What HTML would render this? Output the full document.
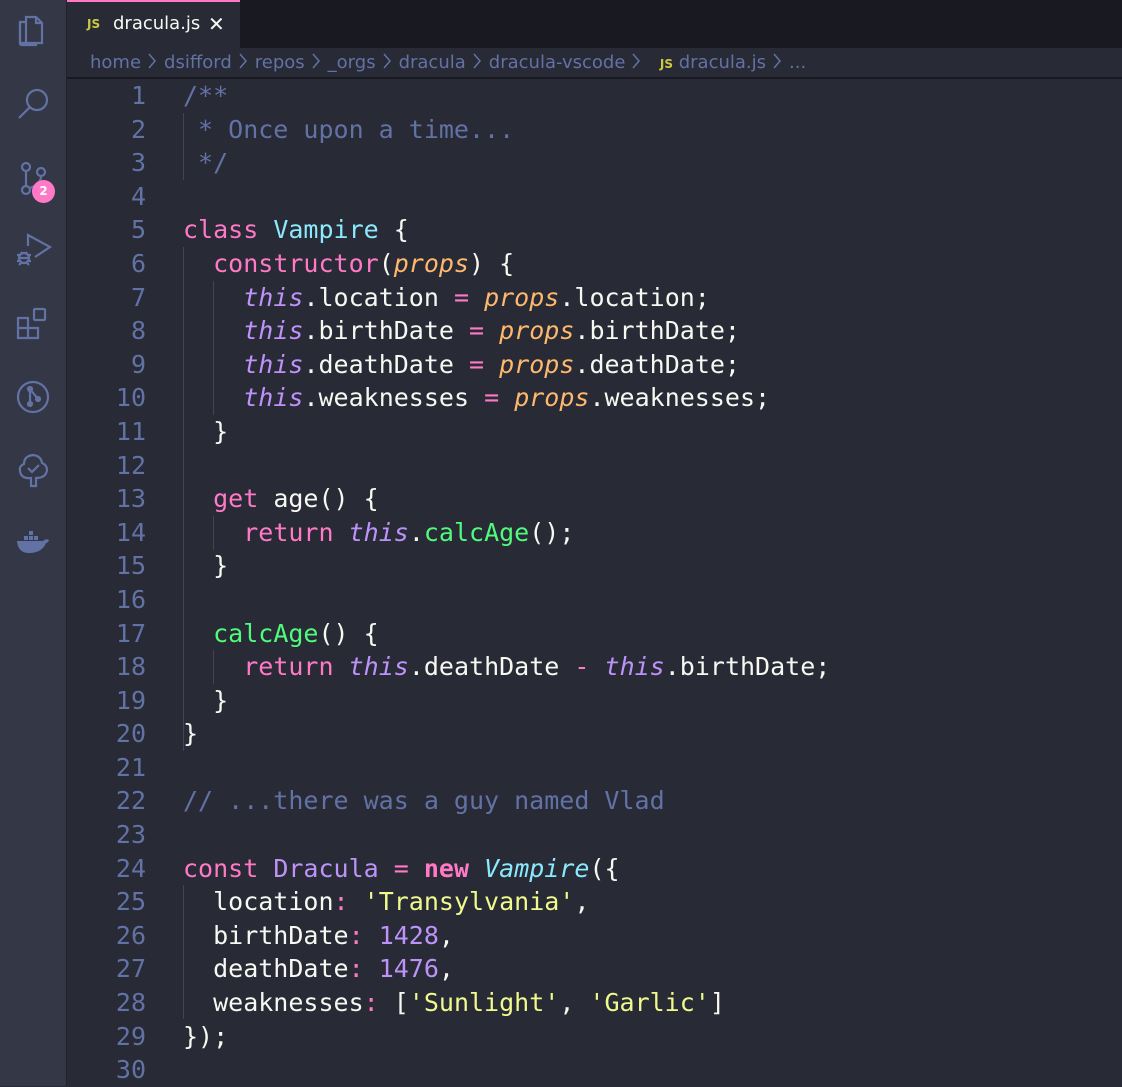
<!DOCTYPE html>
<html><head><meta charset="utf-8"><style>
*{margin:0;padding:0;box-sizing:border-box}
body{width:1122px;height:1086px;background:#282A36;overflow:hidden;position:relative;font-family:"DejaVu Sans","Liberation Sans",sans-serif}
#act{position:absolute;left:0;top:0;width:67px;height:1086px;background:#343746;border-right:1px solid #21222C}
#act svg{position:absolute;left:16px}
#tabs{position:absolute;left:67px;top:0;right:0;height:48px;background:#191A21}
#tab{position:absolute;left:0;top:0;width:173px;height:48px;background:#282A36;border-top:2px solid #FF79C6;color:#F8F8F2;font-size:18px}
.js{color:#CBCB41;font-weight:bold;font-size:12px;font-family:"DejaVu Sans",sans-serif}
#crumb{position:absolute;left:67px;top:48px;right:0;height:31px;border-bottom:2px solid #191A21;color:#6272A4;font-size:18px;padding-left:23px;line-height:29px;white-space:pre}
.sv{display:inline-block;width:23px;text-align:center;vertical-align:middle}
.sv svg{display:inline-block}
#code{position:absolute;left:67px;top:79px;right:0;font-family:"DejaVu Sans Mono","Liberation Mono",monospace;font-size:25px}
.l{height:33.6px;line-height:33.6px;white-space:pre;position:relative}
.n{position:absolute;left:0;width:79px;text-align:right;color:#6272A4}
.c{position:absolute;left:116px;color:#F8F8F2}
.g{position:absolute;width:1px;background:#424450}
.cm{color:#6272A4}.p{color:#FF79C6}.cy{color:#8BE9FD}.gr{color:#50FA7B}.o{color:#FFB86C;font-style:italic}.th{color:#BD93F9;font-style:italic}.pu{color:#BD93F9}.y{color:#F1FA8C}.b{font-weight:bold}.ci{color:#8BE9FD;font-style:italic}
</style></head><body>
<div id="act">
<svg style="top:14px" width="34" height="36" viewBox="0 0 34 36" fill="none" stroke="#6272A4" stroke-width="2.2"><path d="M10 8H4v21h6"/><path d="M10 3h10l6 6v20H10z" fill="#343746"/><path d="M20 3v6h6"/><path d="M4 8v21q0 2 2 2h14v-2" /></svg>
<svg style="top:86px" width="36" height="36" viewBox="0 0 36 36" fill="none" stroke="#6272A4" stroke-width="2.2"><circle cx="21" cy="14" r="10"/><path d="M14 21L3 32"/></svg>
<svg style="top:160px" width="36" height="40" viewBox="0 0 36 40" fill="none" stroke="#6272A4" stroke-width="2.2"><circle cx="10" cy="7" r="4"/><circle cx="10" cy="30" r="4"/><circle cx="25" cy="12" r="4"/><path d="M10 11v15M25 16q0 8-11 12"/></svg>
<div style="position:absolute;left:32px;top:180px;width:23px;height:23px;border-radius:50%;background:#FF79C6;color:#fff;font-size:12px;font-weight:bold;text-align:center;line-height:23px">2</div>
<svg style="top:232px" width="36" height="36" viewBox="0 0 36 36" fill="none" stroke="#6272A4" stroke-width="2.2"><path d="M12 14V3l22 12-15 10"/><ellipse cx="8" cy="26" rx="5" ry="5"/><path d="M1 23h3M1 29h3M12 23h3M12 29h3M3 26h10M3 33l2-2M13 33l-2-2M5 20l2 2M11 20l-2 2"/></svg>
<svg style="top:306px" width="36" height="36" viewBox="0 0 36 36" fill="none" stroke="#6272A4" stroke-width="2.2"><path d="M2 12h10v10H2zM2 22h10v10H2zM12 22h10v10H12z"/><rect x="18" y="3" width="11" height="11" rx="1"/></svg>
<svg style="top:380px" width="36" height="36" viewBox="0 0 36 36" fill="none" stroke="#6272A4" stroke-width="2.2"><circle cx="17" cy="17" r="15"/><circle cx="14" cy="9" r="2" fill="#6272A4"/><circle cx="14" cy="24" r="2" fill="#6272A4"/><circle cx="22" cy="19" r="2" fill="#6272A4"/><path d="M14 9v15M14 9l8 10"/></svg>
<svg style="top:452px" width="36" height="36" viewBox="0 0 36 36" fill="none" stroke="#6272A4" stroke-width="2.2"><path d="M15 34V26Q5 27 4 19q-1-5 4-7 0-8 9-9 8 1 9 8 5 2 5 7-1 8-11 8v8z"/><path d="M12 16l4 4 7-7"/></svg>
<svg style="top:526px" width="36" height="36" viewBox="0 0 36 36"><g fill="#6272A4"><rect x="8" y="10" width="4" height="4"/><rect x="13" y="10" width="4" height="4"/><rect x="13" y="5" width="4" height="4"/><rect x="18" y="10" width="4" height="4"/><path d="M1 15h26q3-3 6-1-1 3-3 3-4 10-17 10-11 0-12-12z"/></g></svg>
</div>
<div id="tabs"><div id="tab"><span class="js" style="position:absolute;left:20px;top:15px">JS</span><span style="position:absolute;left:46px;top:11px">dracula.js</span><span style="position:absolute;left:141px;top:10px;font-size:20px">✕</span></div></div>
<div id="crumb">home<span class="sv"><svg width="9" height="16" viewBox="0 0 9 16"><path d="M1 1l6 7-6 7" fill="none" stroke="#6272A4" stroke-width="1.5"/></svg></span>dsifford<span class="sv"><svg width="9" height="16" viewBox="0 0 9 16"><path d="M1 1l6 7-6 7" fill="none" stroke="#6272A4" stroke-width="1.5"/></svg></span>repos<span class="sv"><svg width="9" height="16" viewBox="0 0 9 16"><path d="M1 1l6 7-6 7" fill="none" stroke="#6272A4" stroke-width="1.5"/></svg></span>_orgs<span class="sv"><svg width="9" height="16" viewBox="0 0 9 16"><path d="M1 1l6 7-6 7" fill="none" stroke="#6272A4" stroke-width="1.5"/></svg></span>dracula<span class="sv"><svg width="9" height="16" viewBox="0 0 9 16"><path d="M1 1l6 7-6 7" fill="none" stroke="#6272A4" stroke-width="1.5"/></svg></span>dracula-vscode<span class="sv"><svg width="9" height="16" viewBox="0 0 9 16"><path d="M1 1l6 7-6 7" fill="none" stroke="#6272A4" stroke-width="1.5"/></svg></span>  <span class="js">JS</span> dracula.js<span class="sv"><svg width="9" height="16" viewBox="0 0 9 16"><path d="M1 1l6 7-6 7" fill="none" stroke="#6272A4" stroke-width="1.5"/></svg></span>...</div>
<div id="code">
<div class="g" style="left:116px;top:34px;height:67px"></div>
<div class="g" style="left:116px;top:168px;height:504px"></div>
<div class="g" style="left:146px;top:202px;height:134px"></div>
<div class="g" style="left:146px;top:437px;height:34px"></div>
<div class="g" style="left:146px;top:571px;height:34px"></div>
<div class="g" style="left:116px;top:806px;height:134px"></div>
<div class="l"><span class="n">1</span><span class="c cm">/**</span></div>
<div class="l"><span class="n">2</span><span class="c cm"> * Once upon a time...</span></div>
<div class="l"><span class="n">3</span><span class="c cm"> */</span></div>
<div class="l"><span class="n">4</span></div>
<div class="l"><span class="n">5</span><span class="c"><span class="p">class</span> <span class="cy">Vampire</span> {</span></div>
<div class="l"><span class="n">6</span><span class="c">  <span class="p">constructor</span>(<span class="o">props</span>) {</span></div>
<div class="l"><span class="n">7</span><span class="c">    <span class="th">this</span>.location <span class="p">=</span> <span class="o">props</span>.location;</span></div>
<div class="l"><span class="n">8</span><span class="c">    <span class="th">this</span>.birthDate <span class="p">=</span> <span class="o">props</span>.birthDate;</span></div>
<div class="l"><span class="n">9</span><span class="c">    <span class="th">this</span>.deathDate <span class="p">=</span> <span class="o">props</span>.deathDate;</span></div>
<div class="l"><span class="n">10</span><span class="c">    <span class="th">this</span>.weaknesses <span class="p">=</span> <span class="o">props</span>.weaknesses;</span></div>
<div class="l"><span class="n">11</span><span class="c">  }</span></div>
<div class="l"><span class="n">12</span></div>
<div class="l"><span class="n">13</span><span class="c">  <span class="p">get</span> age() {</span></div>
<div class="l"><span class="n">14</span><span class="c">    <span class="p">return</span> <span class="th">this</span>.<span class="gr">calcAge</span>();</span></div>
<div class="l"><span class="n">15</span><span class="c">  }</span></div>
<div class="l"><span class="n">16</span></div>
<div class="l"><span class="n">17</span><span class="c">  <span class="gr">calcAge</span>() {</span></div>
<div class="l"><span class="n">18</span><span class="c">    <span class="p">return</span> <span class="th">this</span>.deathDate <span class="p">-</span> <span class="th">this</span>.birthDate;</span></div>
<div class="l"><span class="n">19</span><span class="c">  }</span></div>
<div class="l"><span class="n">20</span><span class="c">}</span></div>
<div class="l"><span class="n">21</span></div>
<div class="l"><span class="n">22</span><span class="c cm">// ...there was a guy named Vlad</span></div>
<div class="l"><span class="n">23</span></div>
<div class="l"><span class="n">24</span><span class="c"><span class="p">const</span> <span class="pu">Dracula</span> <span class="p">=</span> <span class="p b">new</span> <span class="ci">Vampire</span>({</span></div>
<div class="l"><span class="n">25</span><span class="c">  location<span class="p">:</span> <span class="y">'Transylvania'</span>,</span></div>
<div class="l"><span class="n">26</span><span class="c">  birthDate<span class="p">:</span> <span class="pu">1428</span>,</span></div>
<div class="l"><span class="n">27</span><span class="c">  deathDate<span class="p">:</span> <span class="pu">1476</span>,</span></div>
<div class="l"><span class="n">28</span><span class="c">  weaknesses<span class="p">:</span> [<span class="y">'Sunlight'</span>, <span class="y">'Garlic'</span>]</span></div>
<div class="l"><span class="n">29</span><span class="c">});</span></div>
<div class="l"><span class="n">30</span></div>
</div>
</body></html>
